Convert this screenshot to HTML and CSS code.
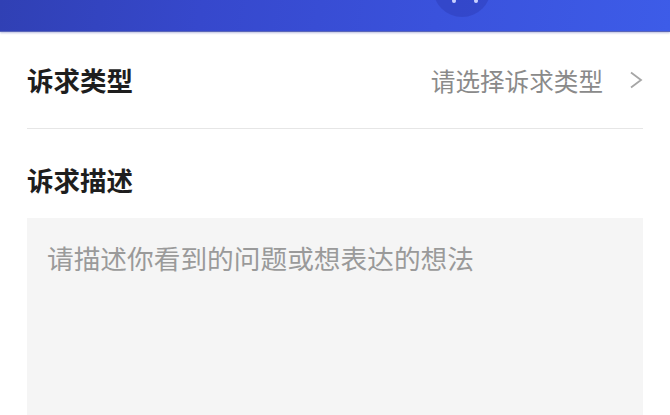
FILE: index.html
```html
<!DOCTYPE html>
<html lang="zh">
<head>
<meta charset="utf-8">
<link rel="stylesheet" href="styles.css">
</head>
<body>
<header class="topbar">
  <svg class="topbar-icon" width="70" height="32" viewBox="0 0 70 32">
    <circle cx="32" cy="-12" r="29" fill="#2a38b0" opacity="0.4"/>
    <circle cx="24" cy="1" r="2" fill="#c9d0ff"/>
    <circle cx="46" cy="1" r="2" fill="#c9d0ff"/>
  </svg>
</header>
<main class="form">
  <div class="row">
    <span class="label">诉求类型</span>
    <span class="picker">
      <span class="picker-text">请选择诉求类型</span>
      <svg class="chevron" width="14" height="18" viewBox="0 0 14 18">
        <path d="M2 1.5 L12 9 L2 16.5" fill="none" stroke="#a6a6a6" stroke-width="1.8"/>
      </svg>
    </span>
  </div>
  <div class="section">
    <div class="label">诉求描述</div>
    <div class="textarea">
      <span class="placeholder">请描述你看到的问题或想表达的想法</span>
    </div>
  </div>
</main>
</body>
</html>
```
FILE: styles.css
```css
html, body {
  margin: 0;
  padding: 0;
  background: #ffffff;
  font-family: "Noto Sans CJK SC", "Noto Sans", sans-serif;
  overflow: hidden;
}
.topbar {
  position: relative;
  height: 31px;
  background: linear-gradient(100deg, #3040b4 0%, #3648cc 30%, #3a52dc 65%, #3d5ce8 100%);
  border-bottom: 1px solid #5a66b8;
  box-shadow: 0 1px 2px rgba(60, 70, 160, 0.35);
}
.topbar-icon {
  position: absolute;
  left: 430px;
  top: 0;
}
.form {
  padding: 0 27px;
}
.row {
  height: 96px;
  display: flex;
  align-items: center;
  justify-content: space-between;
  border-bottom: 1px solid #e6e6e6;
}
.label {
  font-size: 26.5px;
  line-height: 26px;
  font-weight: 700;
  color: #1e1e1e;
}
.picker {
  display: flex;
  align-items: center;
  gap: 26px;
}
.picker-text {
  font-size: 24.6px;
  line-height: 26px;
  color: #8a8a8a;
}
.chevron {
  display: block;
}
.section {
  padding-top: 38px;
}
.textarea {
  margin-top: 25px;
  height: 160px;
  background: #f5f5f5;
  padding: 22px 20px;
}
.placeholder {
  font-size: 26.7px;
  line-height: 36px;
  color: #9a9a9a;
}
```
